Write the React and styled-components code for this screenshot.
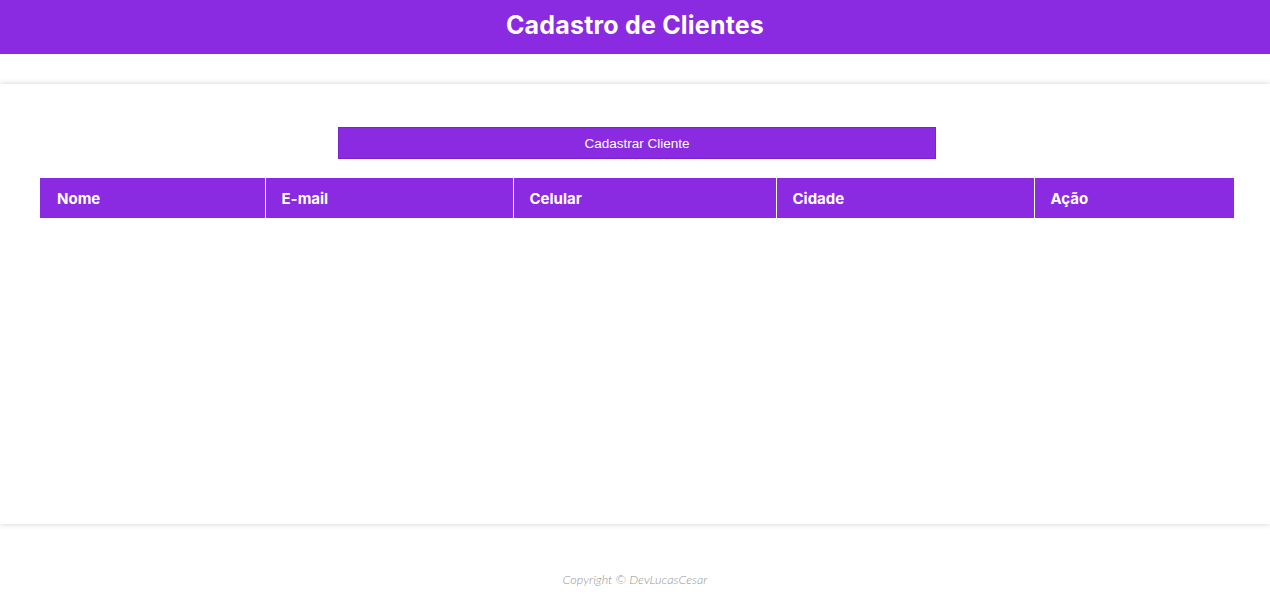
import React from "react";
import styled, { createGlobalStyle } from "styled-components";

const GlobalStyle = createGlobalStyle`
  * { box-sizing: border-box; }
  body {
    margin: 0;
    background: #fff;
    font-family: "Inter", "Noto Sans", sans-serif;
  }
`;

const Header = styled.header`
  height: 54px;
  background: #8a2be2;
  display: flex;
  justify-content: center;
  align-items: center;
`;

const Title = styled.h1`
  margin: 0 0 4px;
  color: #fff;
  font-size: 25px;
  font-weight: 700;
  letter-spacing: 0.2px;
`;

const Main = styled.main`
  margin-top: 30px;
  height: 440px;
  background: #fff;
  box-shadow: 0 0 6px rgba(0, 0, 0, 0.18);
  padding: 43px 36px 0 40px;
  display: flex;
  flex-direction: column;
  align-items: flex-start;
`;

const Button = styled.button`
  align-self: center;
  width: 598px;
  height: 32px;
  border: 1px solid #7a22cc;
  background: #8a2be2;
  color: #fff;
  font-family: "Liberation Sans", Arial, sans-serif;
  font-size: 13.5px;
  cursor: pointer;
`;

const Table = styled.table`
  margin-top: 19px;
  width: 1194px;
  border-collapse: collapse;
`;

const Th = styled.th`
  width: ${({ $w }) => $w}px;
  height: 40px;
  background: #8a2be2;
  color: #fff;
  text-align: left;
  padding: 0 0 0 16px;
  font-size: 15px;
  font-weight: 700;
  border-left: 1px solid #fff;
  &:first-child { border-left: none; padding-left: 17px; }
`;

const Footer = styled.footer`
  height: 71px;
  display: flex;
  justify-content: center;
  align-items: flex-end;
  padding-bottom: 8px;
  color: #959595;
  font-family: "Lato", "Noto Sans", sans-serif;
  font-size: 12.6px;
  font-style: italic;
  font-weight: 300;
`;

const columns = [
  { name: "Nome", w: 225 },
  { name: "E-mail", w: 248 },
  { name: "Celular", w: 263 },
  { name: "Cidade", w: 258 },
  { name: "Ação", w: 200 },
];

export default function App() {
  return (
    <>
      <GlobalStyle />
      <Header>
        <Title>Cadastro de Clientes</Title>
      </Header>
      <Main>
        <Button type="button">Cadastrar Cliente</Button>
        <Table>
          <thead>
            <tr>
              {columns.map((c) => (
                <Th key={c.name} $w={c.w}>{c.name}</Th>
              ))}
            </tr>
          </thead>
        </Table>
      </Main>
      <Footer>Copyright © DevLucasCesar</Footer>
    </>
  );
}
